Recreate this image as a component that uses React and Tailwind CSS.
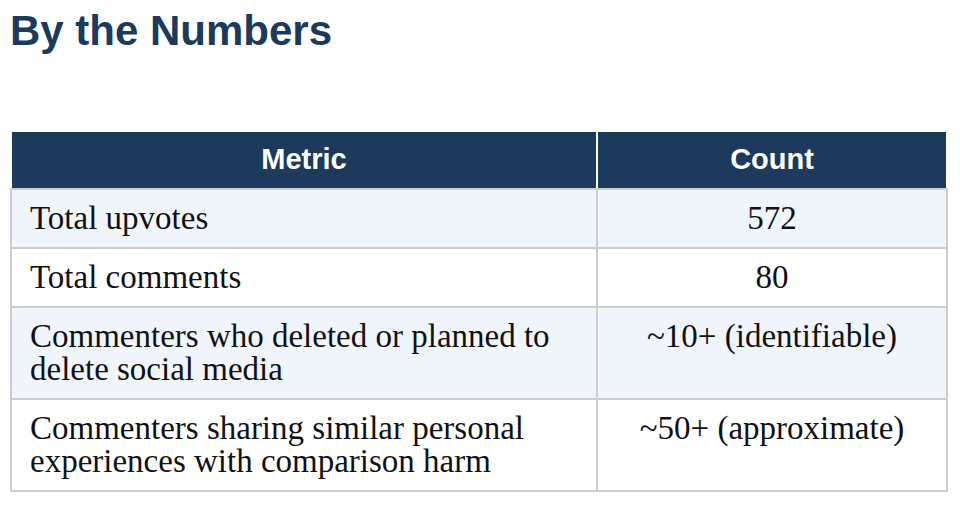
import React from "react";

const rows = [
  { metric: "Total upvotes", count: "572" },
  { metric: "Total comments", count: "80" },
  { metric: "Commenters who deleted or planned to delete social media", count: "~10+ (identifiable)" },
  { metric: "Commenters sharing similar personal experiences with comparison harm", count: "~50+ (approximate)" },
];

const App = () => {
  return (
    <div className="min-h-screen bg-white px-[10px] pt-[10px]">
      <h1 className="font-['Liberation_Sans',Arial,sans-serif] text-[42px] font-bold leading-none text-[#1b3a5c]">
        By the Numbers
      </h1>

      <div className="mt-[80px] w-[938px]">
        {/* header */}
        <div className="flex h-[56px] px-[2px] font-['Liberation_Sans',Arial,sans-serif] text-[29px] font-bold text-white">
          <div className="flex w-[584px] items-center justify-center bg-[#1b3a5c]">Metric</div>
          <div className="w-[2px] bg-white" />
          <div className="flex flex-1 items-center justify-center bg-[#1b3a5c]">Count</div>
        </div>

        {/* body */}
        <div className="border-x-2 border-t-2 border-[#cccccc] font-['Liberation_Serif','Times_New_Roman',serif] text-[33px] leading-[33px] text-[#111111]">
          {rows.map((row, i) => (
            <div
              key={row.metric}
              className={`flex border-b-2 border-[#cccccc] ${i % 2 === 0 ? "bg-[#f0f5fc]" : "bg-white"}`}
            >
              <div className="w-[586px] border-r-2 border-[#cccccc] px-[18px] py-3">{row.metric}</div>
              <div className="flex-1 px-[18px] py-3 text-center">{row.count}</div>
            </div>
          ))}
        </div>
      </div>
    </div>
  );
};

export default App;
